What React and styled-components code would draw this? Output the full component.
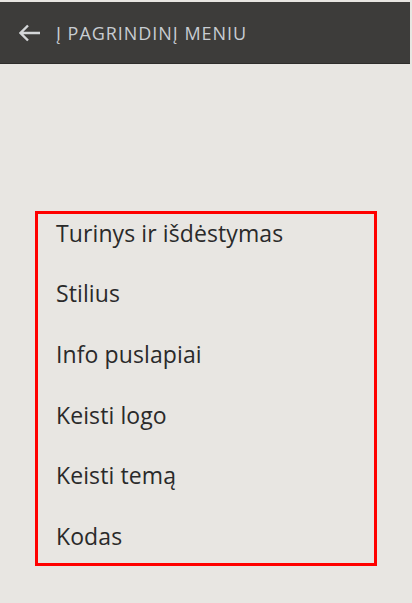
import React from "react";
import styled, { createGlobalStyle } from "styled-components";

const Global = createGlobalStyle`
  html, body { margin: 0; padding: 0; background: #e8e6e2; }
  body { font-family: "Open Sans", "Noto Sans", sans-serif; }
`;

const Page = styled.div`
  width: 412px;
  height: 603px;
  background: #e8e6e2;
  padding-top: 2px;
  box-sizing: border-box;
`;

const Header = styled.div`
  width: 410px;
  height: 62px;
  background: #3d3c3a;
  border-bottom: 1px solid #2e2d2b;
  display: flex;
  align-items: center;
  padding-left: 19px;
  box-sizing: border-box;
  gap: 15px;
`;

const HeaderLabel = styled.span`
  color: #c8cdd2;
  font-size: 18px;
  font-weight: 400;
  letter-spacing: 0.95px;
  text-transform: uppercase;
  line-height: 1;
  padding-top: 1px;
`;

const Menu = styled.ul`
  list-style: none;
  margin: 147px 0 0 35px;
  padding: 0 0 0 18px;
  width: 342px;
  height: 355px;
  box-sizing: border-box;
  border: 3px solid #ff0000;
  display: flex;
  flex-direction: column;
`;

const Item = styled.li`
  font-size: 23px;
  letter-spacing: 0.1px;
  color: #2a2a2a;
  height: 60.6px;
  flex-shrink: 0;
  line-height: 1;
  display: flex;
  align-items: center;
  margin-top: ${(p) => (p.$first ? "-11px" : "0")};
`;

const items = [
  "Turinys ir išdėstymas",
  "Stilius",
  "Info puslapiai",
  "Keisti logo",
  "Keisti temą",
  "Kodas",
];

export default function App() {
  return (
    <Page>
      <Global />
      <Header>
        <svg width="22" height="18" viewBox="0 0 22 18" fill="none">
          <path d="M21 9H2M9 1.5L1.5 9L9 16.5" stroke="#d4d6d8" strokeWidth="2.4" />
        </svg>
        <HeaderLabel>Į pagrindinį meniu</HeaderLabel>
      </Header>
      <Menu>
        {items.map((t, i) => (
          <Item key={t} $first={i === 0}>{t}</Item>
        ))}
      </Menu>
    </Page>
  );
}
